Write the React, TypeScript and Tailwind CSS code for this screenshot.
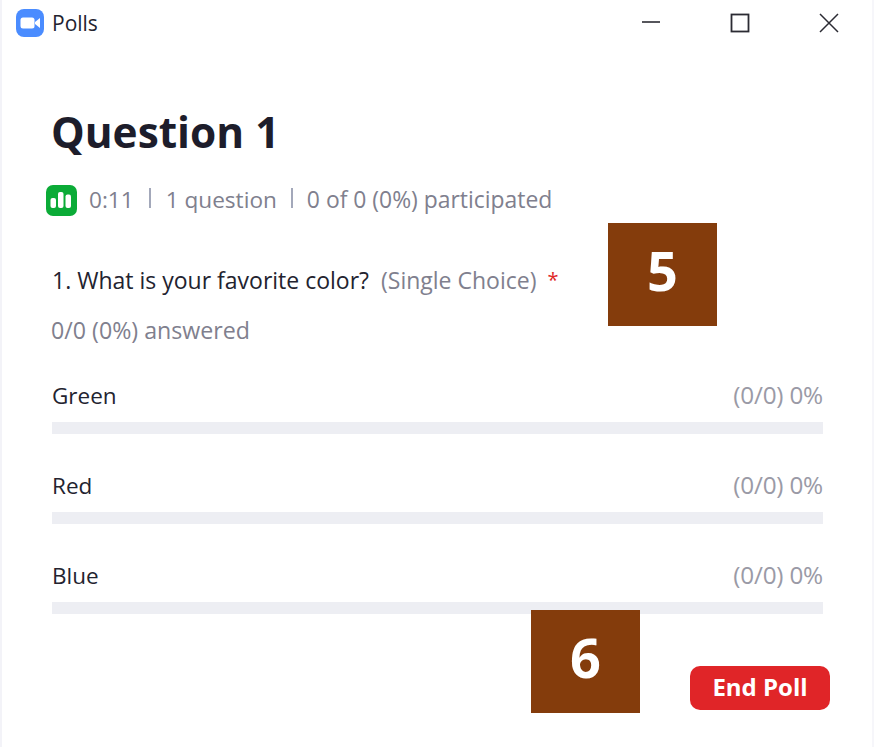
const font = "font-['Open_Sans','Noto_Sans',sans-serif]"

const options = ["Green", "Red", "Blue"]

function PollOption({ label }: { label: string }) {
  return (
    <div className="h-[90px]">
      <div className="flex h-[37px] items-center justify-between">
        <span className="text-[22.5px] text-[#23232f]">{label}</span>
        <span className="text-[24.3px] tracking-[-0.2px] text-[#9a9aa6]">(0/0) 0%</span>
      </div>
      <div className="mt-[8px] h-[12px] bg-[#edeef3]" />
    </div>
  )
}

export default function App() {
  return (
    <div className={`${font} relative h-[747px] w-[874px] overflow-hidden border-x-2 border-l-[#f3f3f8] border-r-[#f6f6fa] bg-white`}>
      {/* title bar */}
      <div className="flex h-[46px] items-center pl-[14px]">
        <svg width="28" height="28" viewBox="0 0 28 28">
          <rect width="28" height="28" rx="8" fill="#4a8cff" />
          <rect x="4.5" y="8.5" width="14" height="11" rx="2.5" fill="#fff" />
          <path d="M19 13l5-4v10l-5-4z" fill="#fff" />
        </svg>
        <span className="ml-[8px] mt-[2px] text-[21px] text-[#23232f]">Polls</span>
        <div className="ml-auto flex items-center pr-[33px]">
          <svg width="20" height="20" viewBox="0 0 20 20" className="mr-[69px]">
            <path d="M1 9h18" stroke="#2b2b33" strokeWidth="1.6" />
          </svg>
          <svg width="20" height="20" viewBox="0 0 20 20" className="mr-[69px]">
            <rect x="1.5" y="1.5" width="17" height="17" fill="none" stroke="#2b2b33" strokeWidth="1.8" />
          </svg>
          <svg width="20" height="20" viewBox="0 0 20 20">
            <path d="M1 1l18 18M19 1L1 19" stroke="#2b2b33" strokeWidth="1.5" />
          </svg>
        </div>
      </div>

      <div className="pl-[50px] pr-[49px]">
        <h1 className="-ml-px mt-[56px] text-[42.4px] leading-[60px] font-bold text-[#1d1d2b]">Question 1</h1>

        <div className="mt-[18px] flex h-[40px] items-center text-[22.6px] text-[#80808e]">
          <svg width="31" height="31" viewBox="0 0 31 31" className="-ml-[6px] shrink-0">
            <rect width="31" height="31" rx="7" fill="#0bab37" />
            <rect x="4.5" y="13" width="5.5" height="10" rx="2" fill="#fff" />
            <rect x="12" y="7" width="5.5" height="16" rx="2" fill="#fff" />
            <rect x="19.5" y="9.5" width="5.5" height="13.5" rx="2" fill="#fff" />
          </svg>
          <span className="ml-[12px]">0:11</span>
          <span className="ml-[15px] mb-[4px] h-[20px] w-[2px] shrink-0 bg-[#a3a8ba]" />
          <span className="ml-[15px]">1 question</span>
          <span className="ml-[14px] mb-[4px] h-[20px] w-[2px] shrink-0 bg-[#a3a8ba]" />
          <span className="ml-[14px] text-[22.9px]">0 of 0 (0%) participated</span>
        </div>

        <div className="mt-[42px] flex h-[36px] items-center text-[23px] text-[#23232f]">
          <span>1. What is your favorite color?</span>
          <span className="ml-[12px] text-[#80808e]">(Single Choice)</span>
          <span className="ml-[11px] text-[20px] text-[#e02828]">*</span>
        </div>

        <p className="-ml-px mt-[14px] text-[23.2px] leading-[36px] text-[#80808e]">0/0 (0%) answered</p>

        <div className="mt-[29px]">
          {options.map((o) => (
            <PollOption key={o} label={o} />
          ))}
        </div>

        <div className="mt-[19px] flex justify-end">
          <button className="-mr-[7px] flex h-[44px] w-[140px] items-center justify-center rounded-[10px] bg-[#e02528] pb-[2px] text-[24px] font-bold text-white">
            End Poll
          </button>
        </div>
      </div>

      {/* callout markers */}
      <div className="absolute left-[606px] top-[223px] flex h-[103px] w-[109px] items-center justify-center bg-[#843c0c] pb-[8px] text-[54px] font-bold text-white">
        5
      </div>
      <div className="absolute left-[529px] top-[610px] flex h-[103px] w-[109px] items-center justify-center bg-[#843c0c] pb-[8px] text-[54px] font-bold text-white">
        6
      </div>
    </div>
  )
}
